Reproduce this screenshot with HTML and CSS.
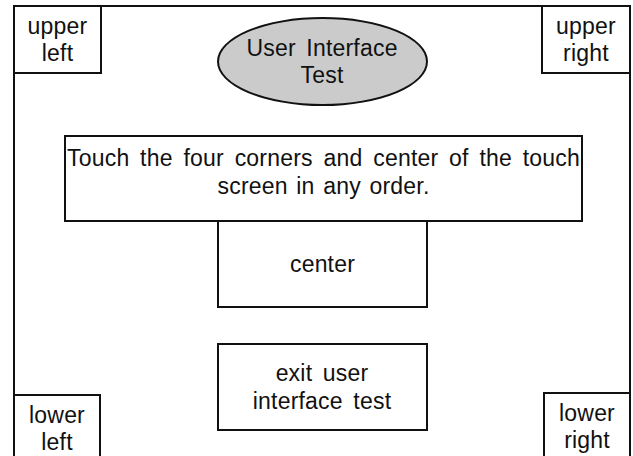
FILE: index.html
```html
<!DOCTYPE html>
<html lang="en">
<head>
    <meta charset="UTF-8">
    <meta name="viewport" content="width=device-width, initial-scale=1.0">
    <title>User Interface Test</title>
    <link rel="stylesheet" href="styles.css">
</head>
<body>
    <div class="frame">
        <div class="top-row">
            <div class="corner upper-left">upper<br>left</div>
            <div class="title-oval">User Interface<br>Test</div>
            <div class="corner upper-right">upper<br>right</div>
        </div>
        <div class="instructions">Touch the four corners and center of the touch screen in any order.</div>
        <div class="box center-box">center</div>
        <div class="bottom-row">
            <div class="corner lower-left">lower<br>left</div>
            <div class="box exit-box">exit user<br>interface test</div>
            <div class="corner lower-right">lower<br>right</div>
        </div>
    </div>
</body>
</html>
```

FILE: styles.css
```css
html, body {
    margin: 0;
    height: 100%;
    overflow: hidden;
    background-color: #fff;
}
body {
    font-family: "Liberation Sans", Arial, sans-serif;
    font-size: 23px;
    line-height: 27px;
    letter-spacing: 0.2px;
    word-spacing: 4px;
    color: #111;
}
.frame {
    box-sizing: border-box;
    margin: 5px 0 0 13px;
    width: 618px;
    height: 480px;
    border: 2px solid #111;
    display: flex;
    flex-direction: column;
}
.top-row {
    display: grid;
    grid-template-columns: 1fr auto 1fr;
    align-items: start;
}
.corner {
    box-sizing: border-box;
    height: 67px;
    display: flex;
    align-items: center;
    justify-content: center;
    text-align: center;
}
.upper-left {
    width: 87px;
    border-right: 2px solid #111;
    border-bottom: 2px solid #111;
}
.upper-right {
    width: 88px;
    justify-self: end;
    border-left: 2px solid #111;
    border-bottom: 2px solid #111;
}
.title-oval {
    box-sizing: border-box;
    width: 211px;
    height: 89px;
    margin-top: 10px;
    border: 2px solid #111;
    border-radius: 50%;
    background-color: #cbcbcb;
    display: flex;
    align-items: center;
    justify-content: center;
    text-align: center;
}
.instructions {
    box-sizing: border-box;
    width: 519px;
    height: 87px;
    margin: 29px 0 0 49px;
    padding: 7px 1px 0;
    border: 2px solid #111;
    text-align: justify;
    text-align-last: center;
    line-height: 28px;
    word-spacing: 2px;
}
.box {
    box-sizing: border-box;
    width: 211px;
    height: 88px;
    border: 2px solid #111;
    display: flex;
    align-items: center;
    justify-content: center;
    text-align: center;
}
.center-box {
    margin: -2px 0 0 202px;
}
.bottom-row {
    display: grid;
    grid-template-columns: 1fr auto 1fr;
    align-items: start;
    margin-top: 35px;
}
.exit-box {
    line-height: 28px;
}
.lower-left {
    width: 86px;
    margin-top: 51px;
    border-top: 2px solid #111;
    border-right: 2px solid #111;
}
.lower-right {
    width: 86px;
    justify-self: end;
    margin-top: 49px;
    border-top: 2px solid #111;
    border-left: 2px solid #111;
}
```
